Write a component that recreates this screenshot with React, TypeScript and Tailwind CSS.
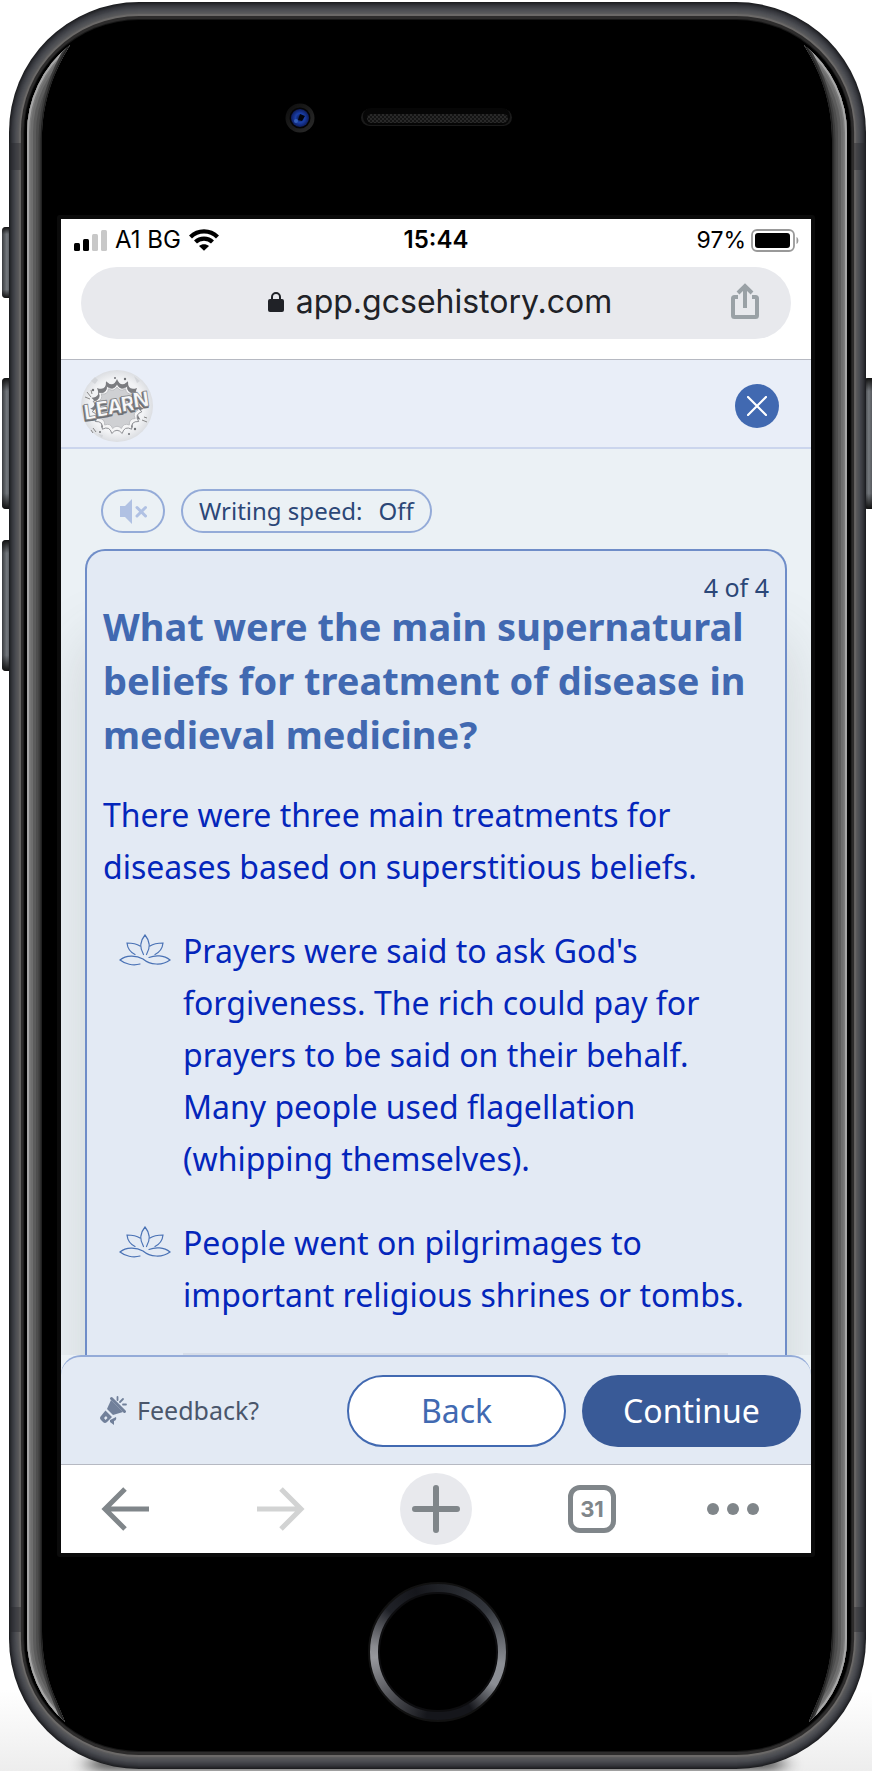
import React from "react";

function Lotus() {
  return (
    <svg viewBox="0 0 52 34" className="mt-[9px] h-[34px] w-[52px] shrink-0" fill="none" stroke="#4a72b5" strokeWidth="1.2" strokeLinecap="round" aria-hidden="true">
      <path d="M26 1C21 7 20 13 24.500 20.500M26 1C31 7 32 13 27.500 20.500M21 12C18 10 14 9 8 9C8.500 14 11 18 16 20.500M31 12C34 10 38 9 44 9C43.500 14 41 18 36 20.500" />
      <path d="M21 30C14 32 6 30 1 26C7 21 17 21 24 25C31 31 43 32 51 26C45 21 36 21 30 23.500" />
    </svg>
  );
}

function Shell() {
  const glint = "M70 45A112 112 0 0 0 27 135V1636A112 112 0 0 0 65 1722C56 1698 42 1675 42 1630V140C42 100 55 70 70 45Z";
  const outerEdge = "M70 45A112 112 0 0 0 27 135V1636A112 112 0 0 0 65 1722";
  const innerEdge = "M65 1722C56 1698 42 1675 42 1630V140C42 100 55 70 70 45";
  const rings: [number, string][] = [
    [0, "#1d1e21"], [1, "#25262a"], [2, "#2d2e33"], [3, "#34363b"], [4, "#3a3b41"], [5, "#3f4046"],
    [6, "#44464b"], [7, "#494b50"], [8, "#4e4f54"], [9, "#525357"], [10, "#565759"], [11, "#5b5b5d"],
    [12, "#6b6968"], [13, "#6b6968"], [14, "#2d2c2c"], [17, "#171717"], [18, "#000"],
  ];
  const glintShape = (
    <g clipPath="url(#glintClip)" fill="none">
      <path d={glint} fill="#4d4d4d" />
      <path d={outerEdge} stroke="#5c5c5c" strokeWidth="18" />
      <path d={outerEdge} stroke="#6e6e6e" strokeWidth="12" />
      <path d={outerEdge} stroke="#7c7c7c" strokeWidth="7" />
      <path d={outerEdge} stroke="#a6a6a6" strokeWidth="4" />
      <path d={innerEdge} stroke="#3c3c3c" strokeWidth="7" />
      <path d={innerEdge} stroke="#222" strokeWidth="3" />
    </g>
  );
  return (
    <svg viewBox="0 0 872 1771" preserveAspectRatio="none" className="absolute inset-0 h-full w-full" aria-hidden="true">
      <defs>
        <clipPath id="glintClip"><path d={glint} /></clipPath>
        <linearGradient id="key" x1="0" x2="1" y1="0" y2="0">
          <stop offset="0" stopColor="#3a3c40" />
          <stop offset=".4" stopColor="#74787d" />
          <stop offset="1" stopColor="#303136" />
        </linearGradient>
        <linearGradient id="keyEnds" x1="0" x2="0" y1="0" y2="1">
          <stop offset="0" stopColor="#111" />
          <stop offset=".1" stopColor="#111" stopOpacity="0" />
          <stop offset=".88" stopColor="#111" stopOpacity="0" />
          <stop offset="1" stopColor="#111" />
        </linearGradient>
        <linearGradient id="floor" x1="0" x2="0" y1="0" y2="1">
          <stop offset="0" stopColor="#fff" />
          <stop offset="1" stopColor="#ededed" />
        </linearGradient>
        <filter id="soft" x="-20%" y="-200%" width="140%" height="500%"><feGaussianBlur stdDeviation="10 4" /></filter>
        <pattern id="mesh" width="4" height="4" patternUnits="userSpaceOnUse">
          <rect width="4" height="4" fill="#141414" />
          <circle cx="1" cy="1" r=".9" fill="#333" />
          <circle cx="3" cy="3" r=".9" fill="#333" />
        </pattern>
        <radialGradient id="lens">
          <stop offset="0" stopColor="#0a1540" />
          <stop offset=".5" stopColor="#1a3fa8" />
          <stop offset="1" stopColor="#0d1c5c" />
        </radialGradient>
        <linearGradient id="cameraRim" x1="0" x2="1" y1="0" y2="1">
          <stop offset="0" stopColor="#0c0c0c" />
          <stop offset="1" stopColor="#2c2c2c" />
        </linearGradient>
      </defs>
      <rect y="1690" width="872" height="81" fill="url(#floor)" />
      <rect x="90" y="1757" width="692" height="14" fill="#000" opacity=".6" filter="url(#soft)" />
      {[[2, 227, 71], [2, 378, 131], [2, 540, 131], [864, 378, 131]].map(([x, y, h]) => (
        <g key={`${x}-${y}`}>
          <rect x={x} y={y} width="12" height={h} rx="4" fill="url(#key)" />
          <rect x={x} y={y} width="12" height={h} rx="4" fill="url(#keyEnds)" />
        </g>
      ))}
      {rings.map(([i, c]) => {
        const side = i * 0.85;
        return <rect key={i} x={9 + side} y={2 + i} width={857 - side * 2} height={1767 - i * 2} rx={130 - side} ry={130 - i} fill={c} />;
      })}
      <path d="M9 143h12v27H9zM854 143h12v27h-12zM9 1607h12v25H9zM854 1607h12v25h-12z" fill="#26262a" opacity=".4" />
      {glintShape}
      <g transform="translate(874 0) scale(-1 1)">{glintShape}</g>
      <rect x="57" y="215" width="758" height="1342" rx="3" fill="#0b0b0b" />
      <circle cx="300" cy="118" r="14.500" fill="url(#cameraRim)" />
      <circle cx="300" cy="118" r="10.500" fill="#050507" />
      <circle cx="300" cy="118" r="9" fill="url(#lens)" />
      <path d="M300 114l5 2-3 5-4-1z" fill="#02040d" />
      <circle cx="296" cy="121" r="2" fill="#3560bb" />
      <rect x="361" y="109" width="151" height="17" rx="8.500" fill="#1a1a1a" />
      <rect x="363" y="108" width="147" height="17" rx="8" fill="#060606" />
      <rect x="367" y="114" width="141" height="9" rx="4.500" fill="url(#mesh)" />
    </svg>
  );
}

function LearnBadge() {
  const burst = (cx: number, cy: number, n: number, r1: number, r2: number) => {
    const pt = (k: number, r: number) => {
      const a = (k * Math.PI) / n - Math.PI / 2;
      return `${(cx + Math.cos(a) * r).toFixed(1)} ${(cy + Math.sin(a) * r).toFixed(1)}`;
    };
    let d = `M${pt(0, r1)}`;
    for (let k = 1; k <= n; k++) d += `Q${pt(2 * k - 1, r2)} ${pt(2 * k, r1)}`;
    return d + "Z";
  };
  const letters: [string, number, number][] = [["L", 4, 50], ["E", 16, 47], ["A", 27, 45], ["R", 41, 42], ["N", 53, 38]];
  return (
    <svg viewBox="0 0 72 72" className="size-[72px]" role="img" aria-label="Learn">
      <defs>
        <radialGradient id="badge">
          <stop offset=".75" stopColor="#f2f3f5" />
          <stop offset="1" stopColor="#dcdee2" />
        </radialGradient>
      </defs>
      <circle cx="36" cy="36" r="36" fill="url(#badge)" />
      <path d={burst(36, 36, 15, 27, 18)} fill="#7b7c80" />
      <path d={burst(36, 39, 15, 25, 18)} fill="#f5f5f6" stroke="#77797d" strokeWidth=".8" />
      <path d={burst(36, 38, 15, 21, 16)} fill="#cfd0d3" stroke="#b5b6ba" strokeWidth=".8" />
      <path d="M4 27l5 2M6 22l4 5M10 20l1 4M61 50l5 2M63 47l3 1M12 58l3 4M10 60l2 3" stroke="#888" strokeWidth="1" />
      <g fill="#707276"><circle cx="34" cy="8" r="1" /><circle cx="44" cy="9" r="1.200" /><circle cx="12" cy="20" r="1.200" /><circle cx="54" cy="59" r="1.200" /><circle cx="48" cy="64" r="1" /><circle cx="19" cy="62" r="1" /></g>
      <path d="M10 11l4-4 3 3-3 4zM53 6l6 5-3 2zM17 64l5 1-1 3z" fill="#d3d5d9" />
      <g fontFamily="Inter, sans-serif" fontWeight="800" fontSize="21" strokeLinejoin="round">
        {letters.map(([l, x, y]) => (
          <g key={l} transform={`rotate(-8 ${x} ${y})`}>
            <text x={x - 1} y={y + 1} fill="#6d6f73" stroke="#6d6f73" strokeWidth="1.5" aria-hidden="true">{l}</text>
            <text x={x} y={y} fill="#f7f7f8" stroke="#808286" strokeWidth=".7">{l}</text>
          </g>
        ))}
      </g>
    </svg>
  );
}

function StatusBar() {
  return (
    <div className="mb-[6px] grid h-[42px] grid-cols-3 items-center px-3 font-[Inter,sans-serif] text-[24px] leading-none text-black">
      <div className="flex items-center gap-2">
        <svg viewBox="0 0 34 21" className="h-[21px] w-[34px]" aria-hidden="true">
          <rect x="1" y="13" width="6" height="8" rx="1.500" />
          <rect x="10" y="9" width="6" height="12" rx="1.500" />
          <rect x="19" y="4" width="6" height="17" rx="1.500" fill="#c8c8c8" />
          <rect x="28" y="0" width="6" height="21" rx="1.500" fill="#c8c8c8" />
        </svg>
        <span>A1 BG</span>
        <svg viewBox="0 0 30 22" className="h-[22px] w-[30px]" aria-hidden="true">
          <g fill="none" stroke="#000" strokeWidth="4.200">
            <path d="M1.500 8C9 0.500 21 0.500 28.500 8" />
            <path d="M6.500 13C11 8.500 19 8.500 23.500 13" />
          </g>
          <path d="M10 17C13 14.800 17 14.800 20 17L15 21.800Z" />
        </svg>
      </div>
      <span className="text-center font-semibold">15:44</span>
      <div className="flex items-center justify-end gap-[5px]">
        <span className="text-[23px]">97%</span>
        <svg viewBox="0 0 48 23" className="h-[23px] w-[48px]" aria-hidden="true">
          <rect x="1" y="1" width="42" height="21" rx="5" fill="none" stroke="#999" strokeWidth="1.800" />
          <rect x="4" y="4" width="35" height="15" rx="3" />
          <path d="M45.500 8C48 9 48 14 45.500 15Z" fill="#999" />
        </svg>
      </div>
    </div>
  );
}

function AddressBar() {
  return (
    <div className="mx-5 grid h-[72px] grid-cols-[78px_1fr_70px] items-center rounded-full bg-[#e8e9ed]">
      <span />
      <div className="flex items-center justify-center gap-3 pb-[2px] font-[Inter,sans-serif] text-[32px] leading-none text-[#202227]">
        <svg viewBox="0 0 16 20" className="h-[20px] w-[16px]" aria-hidden="true">
          <rect y="7" width="16" height="13" rx="2" fill="#202227" />
          <path d="M4 8V5a4 4 0 0 1 8 0v3" fill="none" stroke="#202227" strokeWidth="2" />
        </svg>
        <span>app.gcsehistory.com</span>
      </div>
      <button type="button" aria-label="Share" className="flex pb-[4px] pl-[10px]">
        <svg viewBox="0 0 28 36" className="h-[36px] w-[28px]" fill="none" stroke="#9aa1a6" strokeWidth="4" aria-hidden="true">
          <path d="M7 14H3.500Q2 14 2 15.500V32.500Q2 34 3.500 34H24.500Q26 34 26 32.500V15.500Q26 14 24.500 14H21" />
          <path d="M14 25V3M7 10L14 3L21 10" />
        </svg>
      </button>
    </div>
  );
}

function BrowserToolbar() {
  return (
    <nav aria-label="Browser" className="flex h-[89px] items-center justify-between border-t border-[#b6b9c2] bg-white px-10">
      <button type="button" aria-label="Go back">
        <svg viewBox="0 0 48 44" className="h-[44px] w-[48px]" fill="none" stroke="#80868a" strokeWidth="5" aria-hidden="true">
          <path d="M48 22H4M24 2L4 22L24 42" />
        </svg>
      </button>
      <button type="button" aria-label="Go forward" className="ml-[36px]">
        <svg viewBox="0 0 48 44" className="h-[44px] w-[48px]" fill="none" stroke="#d2d3d3" strokeWidth="5" aria-hidden="true">
          <path d="M0 22H44M24 2L44 22L24 42" />
        </svg>
      </button>
      <button type="button" aria-label="New tab" className="ml-[23px] flex size-[72px] items-center justify-center rounded-full bg-[#e8e9ed]">
        <svg viewBox="0 0 48 48" className="size-[48px]" stroke="#80868a" strokeWidth="6" strokeLinecap="round" aria-hidden="true">
          <path d="M24 3V45M3 24H45" />
        </svg>
      </button>
      <button type="button" aria-label="31 open tabs" className="ml-[24px] flex size-[48px] items-center justify-center rounded-[12px] border-[5px] border-[#80868a] font-[Inter,sans-serif] text-[22px] leading-none font-bold text-[#80868a]">
        31
      </button>
      <button type="button" aria-label="More" className="mr-[12px] ml-[19px]">
        <svg viewBox="0 0 52 12" className="h-[12px] w-[52px]" fill="#80868a" aria-hidden="true">
          <circle cx="6" cy="6" r="6" /><circle cx="26" cy="6" r="6" /><circle cx="46" cy="6" r="6" />
        </svg>
      </button>
    </nav>
  );
}

export default function App() {
  return (
    <div className="relative overflow-hidden bg-white px-[61px] pt-[219px] font-['Noto_Sans',sans-serif]">
      <Shell />
      <div className="relative bg-white">
        <StatusBar />
        <AddressBar />

        <header className="mt-5 flex h-[90px] items-center justify-between border-t border-b-2 border-t-[#b6b9c2] border-b-[#cbd5ed] bg-[#e9eef8] pt-[5px] pr-8 pl-5">
          <LearnBadge />
          <button type="button" aria-label="Close" className="flex size-[44px] items-center justify-center rounded-full bg-[#4169b1]">
            <svg viewBox="0 0 20 20" className="size-[20px]" stroke="#fff" strokeWidth="2.200" strokeLinecap="round" aria-hidden="true">
              <path d="M1 1L19 19M19 1L1 19" />
            </svg>
          </button>
        </header>

        <main className="overflow-hidden bg-[#ebf1f5] px-6 pt-10">
          <div className="flex gap-4 px-4">
            <button type="button" aria-label="Sound off" className="flex h-[44px] w-[64px] items-center justify-center rounded-full border-2 border-[#94abd8]">
              <svg viewBox="0 0 27 25" className="h-[25px] w-[27px]" fill="#b0c1e3" aria-hidden="true">
                <path d="M0 7H5L12 0V25L5 18H0Z" />
                <path d="M17 8.500L25.500 17M25.500 8.500L17 17" stroke="#b0c1e3" strokeWidth="3" strokeLinecap="round" />
              </svg>
            </button>
            <button type="button" className="flex h-[44px] items-center gap-4 rounded-full border-2 border-[#94abd8] px-4 text-[24px] leading-none text-[#2b4777]">
              <span>Writing speed:</span>
              <span>Off</span>
            </button>
          </div>

          <article className="mt-4 rounded-t-[20px] border-2 border-b-0 border-[#6f8dc8] bg-[#e3eaf4] px-4 pt-6 text-[#0426bb] shadow-[0_90px_60px_rgba(80,85,80,0.18)]">
            <p className="text-right text-[25px] leading-6 text-[#2b4777]">4 of 4</p>
            <h1 className="text-[38px] leading-[54px] font-bold whitespace-nowrap text-[#4169b1]">
              What were the main supernatural<br />beliefs for treatment of disease in<br />medieval medicine?
            </h1>
            <p className="mt-7 text-[32px] leading-[52px] whitespace-nowrap">
              There were three main treatments for<br />diseases based on superstitious beliefs.
            </p>
            <ul className="mt-8 flex flex-col gap-8 pl-4 text-[32px] leading-[52px] whitespace-nowrap">
              <li className="flex gap-3">
                <Lotus />
                <p>Prayers were said to ask God's<br />forgiveness. The rich could pay for<br />prayers to be said on their behalf.<br />Many people used flagellation<br />(whipping themselves).</p>
              </li>
              <li className="flex gap-3">
                <Lotus />
                <p>People went on pilgrimages to<br />important religious shrines or tombs.</p>
              </li>
            </ul>
            <div className="mt-8 mr-[41px] ml-[80px] h-[2px] bg-[#d5dce8]" />
          </article>
        </main>

        <footer className="bg-[#ebf1f5]">
          <div className="flex h-[109px] items-center justify-between rounded-t-[20px] border-t-2 border-[#94abd8] bg-[#e3eaf4] pr-[10px] pl-[38px]">
            <button type="button" className="flex items-center gap-[10px] text-[25px] leading-none text-[#4a566b]">
              <svg viewBox="0 0 28 30" className="h-[30px] w-[28px]" fill="#71809a" aria-hidden="true">
                <path d="M12 4L24 16L14 19L8 13Z" />
                <path d="M12.500 2.500L25.500 15.500" stroke="#71809a" strokeWidth="3" strokeLinecap="round" />
                <path d="M18.500 1V4M24 3L21 6M27 8.500H24" stroke="#71809a" strokeWidth="1.800" strokeLinecap="round" />
                <path fillRule="evenodd" d="M6.500 14.500L13 21L8 26Q6 28 4 26L2 24Q0 22 2 20ZM7 20l-2 2 1.500 2 2-2z" />
                <path d="M11 24L17 21Q18 24 15 25V29L11 26Z" />
              </svg>
              Feedback?
            </button>
            <div className="flex gap-4 text-[32px] leading-none">
              <button type="button" className="h-[72px] w-[219px] rounded-full border-2 border-[#4169b1] bg-white text-[#4169b1]">Back</button>
              <button type="button" className="h-[72px] w-[219px] rounded-full bg-[#395a97] text-white">Continue</button>
            </div>
          </div>
        </footer>
        <BrowserToolbar />
      </div>

      <div className="relative flex h-[218px] items-start justify-center pt-[29px] pl-1">
        <button type="button" aria-label="Home" className="size-[140px] rounded-full border-2 border-[#111] bg-[conic-gradient(#1f2126,#33363c_50deg,#8b8e94_100deg,#8b8e94_120deg,#15161b_150deg,#15161b_190deg,#55565b_230deg,#97989d_265deg,#8a8b90_275deg,#202228_310deg,#15161b_340deg,#1f2126)] p-[8px]">
          <span className="block size-full rounded-full border-2 border-[#0d0d0f] bg-black" />
        </button>
      </div>
    </div>
  );
}
